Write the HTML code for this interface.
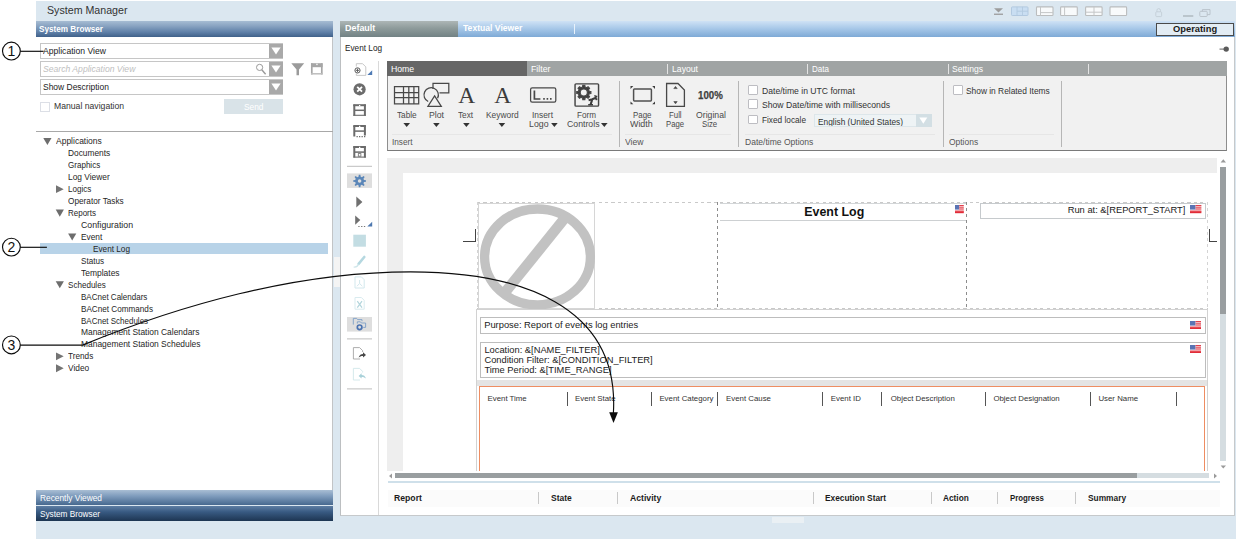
<!DOCTYPE html>
<html>
<head>
<meta charset="utf-8">
<title>System Manager</title>
<style>
*{box-sizing:border-box;margin:0;padding:0}
html,body{width:1238px;height:540px;overflow:hidden;background:#fff}
body{font-family:"Liberation Sans",sans-serif;position:relative;color:#333}
.a{position:absolute}
.t{position:absolute;white-space:nowrap;line-height:1}
.tri{width:0;height:0;border-left:4.5px solid transparent;border-right:4.5px solid transparent;border-top:7px solid #fff}
.dash-h{height:1px;background:repeating-linear-gradient(90deg,#c9c9c9 0 3.2px,transparent 3.2px 6.4px)}
.dash-v{width:1px;background:repeating-linear-gradient(180deg,#8c8c8c 0 3.3px,transparent 3.3px 6px)}
.dash-vl{width:1px;background:repeating-linear-gradient(180deg,#d4d4d4 0 3.3px,transparent 3.3px 6px)}
</style>
</head>
<body>
<div class="a" style="left:36px;top:1px;width:1200.2px;height:537.5px;background:#dbe7f0;"></div>
<div class="t" style="left:46.80px;top:4.90px;font-size:10.8px;color:#333;transform:scaleX(0.9862);transform-origin:0 0;">System Manager</div>
<div class="a" style="left:36px;top:21px;width:297px;height:16px;background:linear-gradient(#a6bcd3,#8aa4c2 30%,#5f80a8 70%,#40618a);"></div>
<div class="t" style="left:39.30px;top:24.80px;font-size:9px;color:#fff;font-weight:bold;transform:scaleX(0.9074);transform-origin:0 0;">System Browser</div>
<div class="a" style="left:36px;top:37px;width:297px;height:453px;background:#fff;"></div>
<div class="a" style="left:332.3px;top:37px;width:1.2px;height:453px;background:#c2c4c6;"></div>
<div class="a" style="left:333.6px;top:256.7px;width:6.2px;height:30px;background:#f4f4f4;"></div>
<div class="a" style="left:40px;top:43.4px;width:243px;height:15.2px;background:#fff;border:1.2px solid #c6c6c6;"></div>
<div class="a" style="left:269px;top:44px;width:13.8px;height:14px;background:#a9a9a9;"></div>
<div class="a" style="left:40px;top:61.4px;width:243px;height:15.2px;background:#fff;border:1.2px solid #c6c6c6;"></div>
<div class="a" style="left:269px;top:62px;width:13.8px;height:14px;background:#a9a9a9;"></div>
<div class="a" style="left:40px;top:79.4px;width:243px;height:15.2px;background:#fff;border:1.2px solid #c6c6c6;"></div>
<div class="a" style="left:269px;top:80px;width:13.8px;height:14px;background:#a9a9a9;"></div>
<div class="t" style="left:43.00px;top:46.70px;font-size:9.2px;color:#222;transform:scaleX(0.9356);transform-origin:0 0;">Application View</div>
<div class="t" style="left:43.40px;top:64.90px;font-size:8.8px;color:#c0c0c0;font-style:italic;transform:scaleX(0.9787);transform-origin:0 0;">Search Application View</div>
<div class="t" style="left:43.00px;top:82.70px;font-size:9.2px;color:#222;transform:scaleX(0.9220);transform-origin:0 0;">Show Description</div>
<svg class="a" style="left:255px;top:63px" width="12" height="12" viewBox="0 0 12 12"><circle cx="4.6" cy="4.4" r="3.1" fill="none" stroke="#9a9a9a" stroke-width="1"/><path d="M6.8 6.8L10.6 11.2" stroke="#9a9a9a" stroke-width="1.4"/></svg>
<svg class="a" style="left:291px;top:63px" width="14" height="13" viewBox="0 0 14 13"><path d="M0.3 0.3H13.2L8 6.6V12.2H5.5V6.6Z" fill="#9b9b9b"/></svg>
<svg class="a" style="left:310px;top:62px" width="15" height="15" viewBox="310 62 15 15" fill="none" stroke="#a6a6a6"><path d="M311.8 63.3V74.6M321.8 63.3V74.6" stroke-width="1.7"/><path d="M311 65.2H322.6" stroke-width="4"/><path d="M311 73.8H322.6" stroke-width="1.5" stroke="#bdbdbd"/><rect x="316.3" y="63.7" width="1.3" height="1.4" fill="#fff" stroke="none"/></svg>
<div class="a" style="left:40px;top:101.6px;width:10px;height:10px;background:#fff;border:1px solid #dcdfe6;"></div>
<div class="t" style="left:53.50px;top:101.80px;font-size:9px;color:#333;transform:scaleX(0.9597);transform-origin:0 0;">Manual navigation</div>
<div class="a" style="left:224px;top:99px;width:59px;height:15px;background:#d9e3e8;"></div>
<div class="t" style="left:243.75px;top:102.65px;font-size:9.3px;color:#fff;transform:scaleX(0.8979);transform-origin:0 0;">Send</div>
<div class="a" style="left:36px;top:131px;width:297px;height:1px;background:#a8a8a8;"></div>
<div class="a" style="left:40px;top:243px;width:288px;height:11px;background:#b8d3e8;"></div>
<div class="t" style="left:55.80px;top:136.90px;font-size:8.8px;color:#262626;transform:scaleX(0.9653);transform-origin:0 0;">Applications</div>
<div class="t" style="left:68.20px;top:148.90px;font-size:8.8px;color:#262626;transform:scaleX(0.9482);transform-origin:0 0;">Documents</div>
<div class="t" style="left:68.20px;top:160.90px;font-size:8.8px;color:#262626;transform:scaleX(0.9145);transform-origin:0 0;">Graphics</div>
<div class="t" style="left:68.20px;top:172.90px;font-size:8.8px;color:#262626;transform:scaleX(0.9507);transform-origin:0 0;">Log Viewer</div>
<div class="t" style="left:68.20px;top:184.90px;font-size:8.8px;color:#262626;transform:scaleX(0.9200);transform-origin:0 0;">Logics</div>
<div class="t" style="left:68.20px;top:196.90px;font-size:8.8px;color:#262626;transform:scaleX(0.9361);transform-origin:0 0;">Operator Tasks</div>
<div class="t" style="left:68.20px;top:208.90px;font-size:8.8px;color:#262626;transform:scaleX(0.9088);transform-origin:0 0;">Reports</div>
<div class="t" style="left:80.60px;top:220.90px;font-size:8.8px;color:#262626;transform:scaleX(0.9935);transform-origin:0 0;">Configuration</div>
<div class="t" style="left:80.60px;top:232.90px;font-size:8.8px;color:#262626;transform:scaleX(0.9466);transform-origin:0 0;">Event</div>
<div class="t" style="left:93.00px;top:244.90px;font-size:8.8px;color:#262626;transform:scaleX(0.9337);transform-origin:0 0;">Event Log</div>
<div class="t" style="left:80.60px;top:256.90px;font-size:8.8px;color:#262626;transform:scaleX(0.9220);transform-origin:0 0;">Status</div>
<div class="t" style="left:80.60px;top:268.90px;font-size:8.8px;color:#262626;transform:scaleX(0.9625);transform-origin:0 0;">Templates</div>
<div class="t" style="left:68.20px;top:280.90px;font-size:8.8px;color:#262626;transform:scaleX(0.9174);transform-origin:0 0;">Schedules</div>
<div class="t" style="left:80.60px;top:292.90px;font-size:8.8px;color:#262626;transform:scaleX(0.9111);transform-origin:0 0;">BACnet Calendars</div>
<div class="t" style="left:80.60px;top:304.90px;font-size:8.8px;color:#262626;transform:scaleX(0.9259);transform-origin:0 0;">BACnet Commands</div>
<div class="t" style="left:80.60px;top:316.90px;font-size:8.8px;color:#262626;transform:scaleX(0.9084);transform-origin:0 0;">BACnet Schedules</div>
<div class="t" style="left:80.60px;top:327.90px;font-size:8.8px;color:#262626;transform:scaleX(0.9567);transform-origin:0 0;">Management Station Calendars</div>
<div class="t" style="left:80.60px;top:339.90px;font-size:8.8px;color:#262626;transform:scaleX(0.9580);transform-origin:0 0;">Management Station Schedules</div>
<div class="t" style="left:68.20px;top:351.90px;font-size:8.8px;color:#262626;transform:scaleX(0.9350);transform-origin:0 0;">Trends</div>
<div class="t" style="left:68.20px;top:363.90px;font-size:8.8px;color:#262626;transform:scaleX(0.9487);transform-origin:0 0;">Video</div>
<div class="a" style="left:36px;top:490px;width:297px;height:15px;background:linear-gradient(#a9bed4,#7f9cbd 40%,#47698f);"></div>
<div class="t" style="left:40.00px;top:493.80px;font-size:9px;color:#fff;transform:scaleX(0.9272);transform-origin:0 0;">Recently Viewed</div>
<div class="a" style="left:36px;top:506px;width:297px;height:15px;background:linear-gradient(#5e7ea3,#385a82 40%,#1d3552);"></div>
<div class="t" style="left:40.00px;top:509.80px;font-size:9px;color:#fff;transform:scaleX(0.9159);transform-origin:0 0;">System Browser</div>
<div class="a" style="left:340px;top:21px;width:895px;height:16px;background:linear-gradient(#cfe2f5,#a9c9e9 45%,#7eaad6);"></div>
<div class="a" style="left:340px;top:21px;width:117.5px;height:16px;background:linear-gradient(#adb6b6,#8e9b9b 45%,#728284);"></div>
<div class="t" style="left:345.30px;top:23.65px;font-size:9.3px;color:#fff;font-weight:bold;transform:scaleX(0.9614);transform-origin:0 0;">Default</div>
<div class="t" style="left:463.30px;top:23.65px;font-size:9.3px;color:#fff;font-weight:bold;transform:scaleX(0.9243);transform-origin:0 0;">Textual Viewer</div>
<div class="a" style="left:574px;top:24px;width:1px;height:10px;background:#e8f2fb;"></div>
<div class="a" style="left:1156px;top:23px;width:78.4px;height:13px;background:#e2ecf4;border:1px solid #4a4a4a;"></div>
<div class="t" style="left:1173.30px;top:23.90px;font-size:9.8px;color:#1a1a1a;font-weight:bold;transform:scaleX(0.9529);transform-origin:0 0;">Operating</div>
<div class="a" style="left:340px;top:37px;width:895px;height:479px;background:#fff;border-left:1px solid #bcbfc1;border-bottom:1px solid #c6c9cb;border-right:1px solid #c6c9cb;"></div>
<div class="t" style="left:345.00px;top:43.70px;font-size:9.2px;color:#222;transform:scaleX(0.8955);transform-origin:0 0;">Event Log</div>
<div class="a" style="left:378px;top:61px;width:1px;height:454px;background:#d9d9d9;"></div>
<div class="a" style="left:387px;top:61px;width:840px;height:90px;background:#f1f1f1;border:1px solid #8e8e8e;border-bottom:1.5px solid #7a7a7a;"></div>
<div class="a" style="left:387px;top:61px;width:840px;height:14.5px;background:#a0a4a4;"></div>
<div class="a" style="left:387px;top:61px;width:140px;height:14.5px;background:#666;"></div>
<div class="t" style="left:391.00px;top:64.65px;font-size:9.3px;color:#fff;transform:scaleX(0.9352);transform-origin:0 0;">Home</div>
<div class="t" style="left:531.00px;top:64.65px;font-size:9.3px;color:#fff;transform:scaleX(0.9436);transform-origin:0 0;">Filter</div>
<div class="a" style="left:667px;top:63.5px;width:1px;height:10px;background:#e4e4e4;"></div>
<div class="t" style="left:671.70px;top:64.65px;font-size:9.3px;color:#fff;transform:scaleX(0.9312);transform-origin:0 0;">Layout</div>
<div class="a" style="left:807.3px;top:63.5px;width:1px;height:10px;background:#e4e4e4;"></div>
<div class="t" style="left:812.00px;top:64.65px;font-size:9.3px;color:#fff;transform:scaleX(0.8654);transform-origin:0 0;">Data</div>
<div class="a" style="left:947.7px;top:63.5px;width:1px;height:10px;background:#e4e4e4;"></div>
<div class="t" style="left:952.00px;top:64.65px;font-size:9.3px;color:#fff;transform:scaleX(0.9226);transform-origin:0 0;">Settings</div>
<div class="a" style="left:1088px;top:63.5px;width:1px;height:10px;background:#e4e4e4;"></div>
<div class="t" style="left:396.85px;top:110.80px;font-size:9px;color:#4a4a4a;transform:scaleX(0.9157);transform-origin:0 0;">Table</div>
<div class="t" style="left:429.20px;top:110.80px;font-size:9px;color:#4a4a4a;transform:scaleX(0.9672);transform-origin:0 0;">Plot</div>
<div class="t" style="left:458.45px;top:110.80px;font-size:9px;color:#4a4a4a;transform:scaleX(0.9149);transform-origin:0 0;">Text</div>
<div class="t" style="left:485.70px;top:110.80px;font-size:9px;color:#4a4a4a;transform:scaleX(0.9311);transform-origin:0 0;">Keyword</div>
<div class="t" style="left:532.30px;top:110.80px;font-size:9px;color:#4a4a4a;transform:scaleX(0.9330);transform-origin:0 0;">Insert</div>
<div class="t" style="left:529.40px;top:119.80px;font-size:9px;color:#4a4a4a;transform:scaleX(0.9741);transform-origin:0 0;">Logo</div>
<div class="t" style="left:577.30px;top:110.80px;font-size:9px;color:#4a4a4a;transform:scaleX(0.9050);transform-origin:0 0;">Form</div>
<div class="t" style="left:566.90px;top:119.80px;font-size:9px;color:#4a4a4a;transform:scaleX(0.9698);transform-origin:0 0;">Controls</div>
<div class="t" style="left:633.40px;top:110.80px;font-size:9px;color:#4a4a4a;transform:scaleX(0.8754);transform-origin:0 0;">Page</div>
<div class="t" style="left:630.15px;top:119.80px;font-size:9px;color:#4a4a4a;transform:scaleX(0.9867);transform-origin:0 0;">Width</div>
<div class="t" style="left:669.30px;top:110.80px;font-size:9px;color:#4a4a4a;transform:scaleX(0.8689);transform-origin:0 0;">Full</div>
<div class="t" style="left:665.80px;top:119.80px;font-size:9px;color:#4a4a4a;transform:scaleX(0.8564);transform-origin:0 0;">Page</div>
<div class="t" style="left:696.05px;top:110.80px;font-size:9px;color:#4a4a4a;transform:scaleX(0.9642);transform-origin:0 0;">Original</div>
<div class="t" style="left:702.20px;top:119.80px;font-size:9px;color:#4a4a4a;transform:scaleX(0.8682);transform-origin:0 0;">Size</div>
<div class="t" style="left:698.40px;top:89.55px;font-size:11.5px;color:#3e3e3e;font-weight:bold;transform:scaleX(0.8432);transform-origin:0 0;-webkit-text-stroke:0.25px #3e3e3e;">100%</div>
<div class="t" style="left:392.40px;top:137.80px;font-size:9px;color:#555;transform:scaleX(0.9108);transform-origin:0 0;">Insert</div>
<div class="t" style="left:625.10px;top:137.80px;font-size:9px;color:#555;transform:scaleX(0.9615);transform-origin:0 0;">View</div>
<div class="t" style="left:744.50px;top:137.80px;font-size:9px;color:#555;transform:scaleX(0.9483);transform-origin:0 0;">Date/time Options</div>
<div class="t" style="left:948.90px;top:137.80px;font-size:9px;color:#555;transform:scaleX(0.9383);transform-origin:0 0;">Options</div>
<div class="a" style="left:392px;top:134px;width:220px;height:1px;background:#e6e6e6;"></div>
<div class="a" style="left:625px;top:134px;width:106px;height:1px;background:#e6e6e6;"></div>
<div class="a" style="left:745px;top:134px;width:190px;height:1px;background:#e6e6e6;"></div>
<div class="a" style="left:949px;top:134px;width:105px;height:1px;background:#e6e6e6;"></div>
<div class="a" style="left:618.8px;top:81px;width:1px;height:66px;background:#b6b6b6;"></div>
<div class="a" style="left:738.1px;top:81px;width:1px;height:66px;background:#b6b6b6;"></div>
<div class="a" style="left:942.6px;top:81px;width:1px;height:66px;background:#b6b6b6;"></div>
<div class="a" style="left:1060.9px;top:81px;width:1px;height:66px;background:#b6b6b6;"></div>
<div class="a" style="left:748.2px;top:85.3px;width:10px;height:9.8px;background:#fff;border:1px solid #bdbdc2;border-radius:1px;"></div>
<div class="a" style="left:748.2px;top:99.4px;width:10px;height:9.8px;background:#fff;border:1px solid #bdbdc2;border-radius:1px;"></div>
<div class="a" style="left:748.2px;top:114.5px;width:10px;height:9.8px;background:#fff;border:1px solid #bdbdc2;border-radius:1px;"></div>
<div class="a" style="left:952.7px;top:85.3px;width:10px;height:9.8px;background:#fff;border:1px solid #bdbdc2;border-radius:1px;"></div>
<div class="t" style="left:762.00px;top:86.80px;font-size:9px;color:#333;transform:scaleX(0.9565);transform-origin:0 0;">Date/time in UTC format</div>
<div class="t" style="left:762.00px;top:100.80px;font-size:9px;color:#333;transform:scaleX(0.9585);transform-origin:0 0;">Show Date/time with milliseconds</div>
<div class="t" style="left:762.00px;top:115.80px;font-size:9px;color:#333;transform:scaleX(0.9163);transform-origin:0 0;">Fixed locale</div>
<div class="t" style="left:966.00px;top:86.80px;font-size:9px;color:#333;transform:scaleX(0.9296);transform-origin:0 0;">Show in Related Items</div>
<div class="a" style="left:814px;top:114px;width:117.5px;height:13px;background:#eef3f5;border:1px solid #dde6ea;"></div>
<div class="a" style="left:915.5px;top:114px;width:16px;height:13px;background:#d3dfe4;"></div>
<div class="a" style="left:815px;top:115px;width:100px;height:11px;overflow:hidden">
<div class="t" style="left:2.60px;top:2.80px;font-size:9px;color:#333;transform:scaleX(0.9235);transform-origin:0 0;">English (United States)</div>
</div>
<svg class="a" style="left:387px;top:76px" width="340" height="40" viewBox="387 76 340 40" fill="none" stroke="#484848" stroke-width="1.25">
<path d="M394.5 86.5H418.7V103.8H394.5Z M394.5 92.5H418.7 M394.5 97.6H418.7 M403.5 86.5V103.8 M408.8 86.5V103.8 M413.9 86.5V103.8"/>
<path d="M433 89V83.4H448.8V92.8H439.5"/><path d="M428.2 101.5A7.2 7.2 0 1 1 437.6 98.2"/><path d="M434.6 95.8L441.3 106.3H427.9Z" stroke-linejoin="miter"/>
<rect x="530.6" y="87.8" width="25.2" height="14.2" rx="1.6"/><path d="M534.4 90.4V99H540.4" stroke-width="1.7"/><path d="M543.2 98.9H544.8 M546.6 98.9H548.2 M550 98.9H551.6" stroke-width="1.7"/>
<rect x="575.05" y="83.85" width="23.5" height="22.3" rx="1" stroke-width="1.45" stroke="#444"/>
<path d="M582.56 87.14 L582.80 85.47 L584.80 85.47 L585.04 87.14 L586.71 87.83 L588.06 86.82 L589.48 88.24 L588.47 89.59 L589.16 91.26 L590.83 91.50 L590.83 93.50 L589.16 93.74 L588.47 95.41 L589.48 96.76 L588.06 98.18 L586.71 97.17 L585.04 97.86 L584.80 99.53 L582.80 99.53 L582.56 97.86 L580.89 97.17 L579.54 98.18 L578.12 96.76 L579.13 95.41 L578.44 93.74 L576.77 93.50 L576.77 91.50 L578.44 91.26 L579.13 89.59 L578.12 88.24 L579.54 86.82 L580.89 87.83Z" fill="#3c3c3c"/><circle cx="583.8" cy="92.5" r="3.6" fill="#f1f1f1"/>
<path d="M588.6 100.2L592.3 99.3L596.6 97.6 M592.3 99.3L590.6 104.6" stroke="#3c3c3c" stroke-width="2.1" stroke-linecap="butt"/><path d="M594.3 95.6L597.2 96.8M595.6 99.8L597.3 98.6M588.2 104.8H593" stroke="#3c3c3c" stroke-width="1.5"/>
<rect x="633.6" y="88.9" width="17.8" height="12" rx="0.8" stroke-width="1.5" stroke="#505050"/>
<path d="M630.5 86.1H633.3L630.5 88.9Z M655 86.1H652.2L655 88.9Z M630.5 104.2H633.3L630.5 101.4Z M655 104.2H652.2L655 101.4Z" fill="#3c3c3c" stroke="none"/>
<path d="M666.6 83.5H678L684.4 90V106.3H666.6Z" stroke-width="1.3"/>
<path d="M673.8 88.6L675.5 86.4L677.2 88.6Z M673.8 101.6L675.5 103.8L677.2 101.6Z" fill="#484848" stroke-width="0.6"/>
</svg>
<div class="t" style="left:458.3px;top:84.1px;font-family:'Liberation Serif',serif;font-size:23.4px;color:#3c3c3c">A</div>
<div class="t" style="left:494.3px;top:84.1px;font-family:'Liberation Serif',serif;font-size:23.4px;color:#3c3c3c">A</div>
<svg class="a" style="left:990px;top:0" width="246" height="22" viewBox="990 0 246 22" fill="none">
<path d="M994 8.2H1003L998.5 12.6Z" fill="#9c9c9c"/><rect x="994" y="13.6" width="9" height="1.3" fill="#9c9c9c"/>
<rect x="1011.5" y="6.9" width="16.5" height="8.6" rx="0.8" fill="#c9def2" stroke="#b2c9e0" stroke-width="1"/><path d="M1017 6.9V15.5M1022.5 6.9V15.5M1017 11.2H1028" stroke="#b2c9e0" stroke-width="0.9"/>
<rect x="1036.5" y="6.9" width="16.5" height="8.6" rx="0.8" fill="#f8fafb" stroke="#bbbdbe" stroke-width="1.1"/><path d="M1040.5 6.9V15.5M1040.5 12.6H1053" stroke="#c4c6c7" stroke-width="1"/>
<rect x="1060.6" y="6.9" width="16.7" height="8.6" rx="0.8" fill="#f8fafb" stroke="#bbbdbe" stroke-width="1.1"/><path d="M1064.6 6.9V15.5" stroke="#c4c6c7" stroke-width="1"/>
<rect x="1085.6" y="6.9" width="16.5" height="8.6" rx="0.8" fill="#f8fafb" stroke="#bbbdbe" stroke-width="1.1"/><path d="M1094 6.9V15.5M1085.6 12.2H1102" stroke="#c4c6c7" stroke-width="1"/>
<rect x="1110" y="6.9" width="16.6" height="8.6" rx="0.8" fill="#f8fafb" stroke="#bbbdbe" stroke-width="1.1"/>
<rect x="1155.8" y="11.8" width="5.8" height="4.8" rx="0.8" stroke="#c3ced7" stroke-width="0.9"/><path d="M1156.9 11.8V10.4A1.8 1.8 0 0 1 1160.5 10.4V11.8" stroke="#c3ced7" stroke-width="0.9"/>
<path d="M1183 16H1193.3" stroke="#a9b2b9" stroke-width="1.3"/>
<rect x="1199.8" y="11.3" width="7.4" height="5.2" rx="0.8" stroke="#b7c0c7" stroke-width="0.9"/><path d="M1202.4 11.3V9.6H1210V14.6H1207.2" stroke="#b7c0c7" stroke-width="0.9"/>
</svg>
<svg class="a" style="left:1216px;top:44px" width="16" height="10" viewBox="1216 44 16 10"><path d="M1219.5 49.1H1224" stroke="#666" stroke-width="1"/><circle cx="1226.2" cy="49.1" r="2.7" fill="#5a5a5a"/></svg>
<svg class="a" style="left:344px;top:58px" width="34" height="336" viewBox="344 58 34 336" fill="none">
<path d="M356.3 66.5V63.7H362.6L365.8 66.9V75.4H356.3V73.5" stroke="#c2c2c2" stroke-width="0.9"/>
<circle cx="357.5" cy="70.4" r="2.6" stroke="#5a5a5a" stroke-width="1"/><path d="M357.5 68.6V72.2M355.7 70.4H359.3" stroke="#5a5a5a" stroke-width="0.9"/>
<path d="M372.2 70.3V74.9H367.3Z" fill="#4f7bb5"/>
<circle cx="359.6" cy="89.3" r="6.1" fill="#6c6c6c"/><path d="M357.2 86.9L362 91.7M362 86.9L357.2 91.7" stroke="#fff" stroke-width="1.8"/>
<path d="M354.3 104.4V115.8M364.9 104.4V115.8" stroke="#6b6b6b" stroke-width="2"/><path d="M353.3 115.3H365.9" stroke="#6b6b6b" stroke-width="1.1"/>
<path d="M353.3 105.2H365.9" stroke="#6b6b6b" stroke-width="2"/><rect x="359" y="105.0" width="1.3" height="1.3" fill="#fff"/>
<path d="M354.1 110.3H365.1" stroke="#6b6b6b" stroke-width="1.5"/>
<path d="M354.3 136.6V125.8M364.9 125.8V135.4" stroke="#6b6b6b" stroke-width="2"/>
<path d="M356.5 136.6H357.8M359 136.6H360.3M361.5 136.6H362.8M364 136.6H365.3" stroke="#6b6b6b" stroke-width="1.2"/>
<path d="M353.3 126H365.9" stroke="#6b6b6b" stroke-width="2"/><rect x="359" y="125.8" width="1.3" height="1.3" fill="#fff"/>
<path d="M354.1 131.1H365.1" stroke="#6b6b6b" stroke-width="1.5"/>
<path d="M354.3 146.2V157.6M364.9 146.2V157.6" stroke="#6b6b6b" stroke-width="2"/><path d="M353.3 157.1H365.9" stroke="#6b6b6b" stroke-width="1.1"/>
<path d="M353.3 147H365.9" stroke="#6b6b6b" stroke-width="2"/><rect x="359" y="146.8" width="1.3" height="1.3" fill="#fff"/>
<path d="M354.1 152.1H365.1" stroke="#6b6b6b" stroke-width="1.5"/>
<rect x="358.3" y="153.6" width="2.6" height="2.6" stroke="#6b6b6b" stroke-width="0.8"/>
<path d="M347 166.3H372" stroke="#bdbdbd" stroke-width="1"/>
<rect x="347" y="173.4" width="25" height="14.5" fill="#dedede"/>
<path d="M358.52 176.63 L358.80 174.65 L360.40 174.65 L360.68 176.63 L361.92 177.14 L363.52 175.94 L364.66 177.08 L363.46 178.68 L363.97 179.92 L365.95 180.20 L365.95 181.80 L363.97 182.08 L363.46 183.32 L364.66 184.92 L363.52 186.06 L361.92 184.86 L360.68 185.37 L360.40 187.35 L358.80 187.35 L358.52 185.37 L357.28 184.86 L355.68 186.06 L354.54 184.92 L355.74 183.32 L355.23 182.08 L353.25 181.80 L353.25 180.20 L355.23 179.92 L355.74 178.68 L354.54 177.08 L355.68 175.94 L357.28 177.14Z" fill="#5a86b8"/><circle cx="359.6" cy="181" r="1.8" fill="#dedede"/>
<path d="M356.3 196.6L362.4 202L356.3 207.4Z" fill="#707070"/>
<path d="M355.2 215.5L360.3 220.1L355.2 224.8Z" fill="#707070"/>
<path d="M358.3 226.5H359.6M361.1 226.5H362.4M363.9 226.5H365.2" stroke="#777" stroke-width="1.2"/>
<path d="M372.2 221.8V226.5H367.3Z" fill="#4f79b0"/>
<rect x="353.3" y="234.7" width="12.6" height="12" fill="#c3dde3"/>
<path d="M358.6 263.8L364.3 257" stroke="#b5d8e0" stroke-width="2.6" stroke-linecap="round"/><path d="M353.6 267C356.5 267.4 357.8 266 358.4 264.2" stroke="#cfe6ea" stroke-width="1.2"/>
<path d="M355 276.9H361.4L364.2 279.7V288H355Z" stroke="#d3e8ed" stroke-width="1"/><path d="M359.6 280V283.5L357 286.2M359.6 283.5L362.3 286.2" stroke="#d3e8ed" stroke-width="1"/>
<path d="M355 297.5H361.4L364.2 300.3V309.2H355Z" stroke="#d9ebef" stroke-width="1"/><path d="M357.3 301.2L362 307.6M362 301.2L357.3 307.6" stroke="#b3d5dc" stroke-width="1.2"/>
<rect x="347" y="317" width="25" height="14.6" fill="#dedede"/>
<path d="M353.3 324.6V318.4H356.6L357.6 319.6H362V321.2" stroke="#7d9fc7" stroke-width="0.9"/>
<path d="M357.3 323.6V321.8H360.4L361.4 323H365.6V327.4H363.2" stroke="#7d9fc7" stroke-width="0.9"/>
<circle cx="359.6" cy="327.3" r="2.3" stroke="#4a72b0" stroke-width="1.7"/>
<path d="M347 338.9H372" stroke="#bdbdbd" stroke-width="1"/>
<path d="M362.6 352V350.6L359.6 347.6H353.4V359H360" stroke="#a4a4a4" stroke-width="0.9"/>
<path d="M358.6 357.6C359.4 355 361 354 363 354V352.3L366 355L363 357.5V355.9C361.4 355.8 359.9 356.2 358.6 357.6Z" fill="#484848"/>
<path d="M362.6 372.5V371.4L359.6 368.4H353.4V380H360" stroke="#d0e6ea" stroke-width="0.9"/>
<path d="M366 378.6C365.2 376 363.6 375 361.6 375V373.3L358.6 376L361.6 378.5V376.9C363.2 376.8 364.7 377.2 366 378.6Z" fill="#a9d1d9"/>
<path d="M347 388.9H372" stroke="#bdbdbd" stroke-width="1"/>
</svg>
<div class="a" style="left:387px;top:158px;width:830px;height:313px;background:#eeeeee;"></div>
<div class="a" style="left:403px;top:173px;width:814px;height:298px;background:#fff;"></div>
<div class="a" style="left:1220.2px;top:167px;width:5.8px;height:294px;background:#d5dde1;"></div>
<div class="a" style="left:1220.2px;top:167px;width:5.8px;height:147px;background:#999ea0;"></div>
<div class="a" style="left:395px;top:473.4px;width:814px;height:5px;background:#d5dde1;"></div>
<div class="a" style="left:395px;top:473.4px;width:742.3px;height:5px;background:#999ea0;"></div>
<div class="a" style="left:388px;top:481px;width:832px;height:1.5px;background:#cfe0ea;"></div>
<div class="a dash-h" style="left:477px;top:201.5px;width:731px"></div>
<div class="a dash-h" style="left:477px;top:308.2px;width:731px"></div>
<div class="a dash-vl" style="left:477px;top:202px;height:106.5px"></div>
<div class="a dash-v" style="left:717.4px;top:202px;height:106.5px"></div>
<div class="a dash-v" style="left:966.4px;top:202px;height:106.5px"></div>
<div class="a dash-vl" style="left:1207.4px;top:202px;height:106.5px"></div>
<div class="a" style="left:478px;top:202.5px;width:117px;height:106px;background:#fff;border:1px solid #d6d6d6;"></div>
<svg class="a" style="left:478px;top:202px" width="118" height="107" viewBox="0 0 118 107"><ellipse cx="59.5" cy="54.9" rx="52.9" ry="47.9" fill="none" stroke="#c2c2c2" stroke-width="9.3"/><path d="M23.5 94.8L89.5 12.8" stroke="#c2c2c2" stroke-width="10.5"/></svg>
<div class="a" style="left:463px;top:229px;width:13px;height:13px;background:transparent;border-right:1px solid #444;border-bottom:1px solid #444;"></div>
<div class="a" style="left:1209px;top:229px;width:8px;height:13px;background:transparent;border-left:1px solid #444;border-bottom:1px solid #444;"></div>
<div class="a" style="left:719.5px;top:202.5px;width:246px;height:18.2px;background:#fff;border-top:1px solid #d3d6d8;border-bottom:1.4px solid #cdd0d2;"></div>
<div class="t" style="left:804.33px;top:206.10px;font-size:12.4px;color:#111;font-weight:bold;">Event Log</div>
<div class="a" style="left:980px;top:202.6px;width:226.4px;height:16.2px;background:#fff;border:1.2px solid #c6cacd;"></div>
<div class="t" style="left:1067.70px;top:205.64px;font-size:9.33px;color:#222;">Run at: &amp;[REPORT_START]</div>
<div class="a" style="left:476px;top:309.2px;width:732.4px;height:161.8px;background:#fff;border:1px solid #d2d2d2;border-bottom:none;"></div>
<div class="a" style="left:480px;top:317px;width:726px;height:17px;background:#fff;border:1px solid #bdbdbd;"></div>
<div class="t" style="left:484.20px;top:320.63px;font-size:9.33px;color:#222;">Purpose: Report of events log entries</div>
<div class="a" style="left:480px;top:341.5px;width:726px;height:36px;background:#fff;border:1px solid #bdbdbd;"></div>
<div class="t" style="left:484.40px;top:345.63px;font-size:9.33px;color:#222;">Location: &amp;[NAME_FILTER]</div>
<div class="t" style="left:484.40px;top:355.63px;font-size:9.33px;color:#222;">Condition Filter: &amp;[CONDITION_FILTER]</div>
<div class="t" style="left:484.40px;top:365.63px;font-size:9.33px;color:#222;">Time Period: &amp;[TIME_RANGE]</div>
<div class="a" style="left:477px;top:380px;width:730px;height:6px;background:#e4e4e4;"></div>
<div class="a" style="left:479px;top:385.8px;width:726px;height:85.2px;background:#fff;border:1.4px solid #ee8d62;border-bottom:none;"></div>
<div class="t" style="left:487.50px;top:394.88px;font-size:7.85px;color:#333;">Event Time</div>
<div class="t" style="left:575.00px;top:394.88px;font-size:7.85px;color:#333;">Event State</div>
<div class="t" style="left:659.40px;top:394.88px;font-size:7.85px;color:#333;">Event Category</div>
<div class="t" style="left:726.00px;top:394.88px;font-size:7.85px;color:#333;">Event Cause</div>
<div class="t" style="left:830.80px;top:394.88px;font-size:7.85px;color:#333;">Event ID</div>
<div class="t" style="left:890.70px;top:394.88px;font-size:7.85px;color:#333;">Object Description</div>
<div class="t" style="left:993.40px;top:394.88px;font-size:7.85px;color:#333;">Object Designation</div>
<div class="t" style="left:1098.40px;top:394.88px;font-size:7.85px;color:#333;">User Name</div>
<div class="a" style="left:566.8px;top:391.5px;width:1px;height:14.5px;background:#555;"></div>
<div class="a" style="left:650.5px;top:391.5px;width:1px;height:14.5px;background:#555;"></div>
<div class="a" style="left:717.3px;top:391.5px;width:1px;height:14.5px;background:#555;"></div>
<div class="a" style="left:821.5px;top:391.5px;width:1px;height:14.5px;background:#555;"></div>
<div class="a" style="left:881.2px;top:391.5px;width:1px;height:14.5px;background:#555;"></div>
<div class="a" style="left:985.1px;top:391.5px;width:1px;height:14.5px;background:#555;"></div>
<div class="a" style="left:1090.1px;top:391.5px;width:1px;height:14.5px;background:#555;"></div>
<div class="a" style="left:1175.5px;top:391.5px;width:1px;height:14.5px;background:#555;"></div>
<svg class="a" style="left:955.1px;top:205.4px" width="8.8" height="8.2" viewBox="0 0 8.8 8.2"><rect width="8.8" height="8.2" fill="#fff"/><rect x="4.136" y="0" width="4.664000000000001" height="1.2" fill="#e2404c"/><rect x="4.136" y="1.7" width="4.664000000000001" height="1.2" fill="#e6606a"/><rect x="4.136" y="3.4" width="4.664000000000001" height="1.2" fill="#e2404c"/><rect y="5.6" width="8.8" height="2.6" fill="#e0202e"/><rect y="6.7" width="8.8" height="0.4" fill="#f3a0a6"/><rect width="4.136" height="4.6" fill="#5a74b4"/></svg>
<svg class="a" style="left:1190.2px;top:205.4px" width="11.4" height="8.2" viewBox="0 0 11.4 8.2"><rect width="11.4" height="8.2" fill="#fff"/><rect x="5.358" y="0" width="6.042000000000001" height="1.2" fill="#e2404c"/><rect x="5.358" y="1.7" width="6.042000000000001" height="1.2" fill="#e6606a"/><rect x="5.358" y="3.4" width="6.042000000000001" height="1.2" fill="#e2404c"/><rect y="5.6" width="11.4" height="2.6" fill="#e0202e"/><rect y="6.7" width="11.4" height="0.4" fill="#f3a0a6"/><rect width="5.358" height="4.6" fill="#5a74b4"/></svg>
<svg class="a" style="left:1189.6px;top:320.6px" width="11.4" height="8.2" viewBox="0 0 11.4 8.2"><rect width="11.4" height="8.2" fill="#fff"/><rect x="5.358" y="0" width="6.042000000000001" height="1.2" fill="#e2404c"/><rect x="5.358" y="1.7" width="6.042000000000001" height="1.2" fill="#e6606a"/><rect x="5.358" y="3.4" width="6.042000000000001" height="1.2" fill="#e2404c"/><rect y="5.6" width="11.4" height="2.6" fill="#e0202e"/><rect y="6.7" width="11.4" height="0.4" fill="#f3a0a6"/><rect width="5.358" height="4.6" fill="#5a74b4"/></svg>
<svg class="a" style="left:1189.6px;top:344.6px" width="11.4" height="8.2" viewBox="0 0 11.4 8.2"><rect width="11.4" height="8.2" fill="#fff"/><rect x="5.358" y="0" width="6.042000000000001" height="1.2" fill="#e2404c"/><rect x="5.358" y="1.7" width="6.042000000000001" height="1.2" fill="#e6606a"/><rect x="5.358" y="3.4" width="6.042000000000001" height="1.2" fill="#e2404c"/><rect y="5.6" width="11.4" height="2.6" fill="#e0202e"/><rect y="6.7" width="11.4" height="0.4" fill="#f3a0a6"/><rect width="5.358" height="4.6" fill="#5a74b4"/></svg>
<div class="a" style="left:387.5px;top:490px;width:832.5px;height:17px;background:#fbfbfb;"></div>
<div class="t" style="left:394.00px;top:493.75px;font-size:9.1px;color:#1c1c1c;font-weight:bold;transform:scaleX(0.9516);transform-origin:0 0;">Report</div>
<div class="t" style="left:550.50px;top:493.75px;font-size:9.1px;color:#1c1c1c;font-weight:bold;transform:scaleX(0.9348);transform-origin:0 0;">State</div>
<div class="t" style="left:629.50px;top:493.75px;font-size:9.1px;color:#1c1c1c;font-weight:bold;transform:scaleX(0.9523);transform-origin:0 0;">Activity</div>
<div class="t" style="left:825.30px;top:493.75px;font-size:9.1px;color:#1c1c1c;font-weight:bold;transform:scaleX(0.9154);transform-origin:0 0;">Execution Start</div>
<div class="t" style="left:942.80px;top:493.75px;font-size:9.1px;color:#1c1c1c;font-weight:bold;transform:scaleX(0.9114);transform-origin:0 0;">Action</div>
<div class="t" style="left:1009.70px;top:493.75px;font-size:9.1px;color:#1c1c1c;font-weight:bold;transform:scaleX(0.8593);transform-origin:0 0;">Progress</div>
<div class="t" style="left:1087.50px;top:493.75px;font-size:9.1px;color:#1c1c1c;font-weight:bold;transform:scaleX(0.9186);transform-origin:0 0;">Summary</div>
<div class="a" style="left:538.4px;top:492px;width:1px;height:12px;background:#c8c8c8;"></div>
<div class="a" style="left:616.5px;top:492px;width:1px;height:12px;background:#c8c8c8;"></div>
<div class="a" style="left:812.8px;top:492px;width:1px;height:12px;background:#c8c8c8;"></div>
<div class="a" style="left:930.5px;top:492px;width:1px;height:12px;background:#c8c8c8;"></div>
<div class="a" style="left:996.5px;top:492px;width:1px;height:12px;background:#c8c8c8;"></div>
<div class="a" style="left:1075.3px;top:492px;width:1px;height:12px;background:#c8c8c8;"></div>
<div class="a" style="left:772px;top:517px;width:32px;height:5.5px;background:#eaf0f4;"></div>
<svg class="a" style="left:0;top:0" width="1238" height="540" viewBox="0 0 1238 540"><path d="M271.40 47.60 L280.60 47.60 L276.00 54.60Z" fill="#fff"/><path d="M271.40 65.60 L280.60 65.60 L276.00 72.60Z" fill="#fff"/><path d="M271.40 83.60 L280.60 83.60 L276.00 90.60Z" fill="#fff"/><path d="M43.30 137.95 L51.50 137.95 L47.40 145.05Z" fill="#6d6d6d"/><path d="M56.00 185.26 L63.70 189.16 L56.00 193.06Z" fill="#747474"/><path d="M55.70 209.59 L63.90 209.59 L59.80 216.69Z" fill="#6d6d6d"/><path d="M68.10 233.47 L76.30 233.47 L72.20 240.57Z" fill="#6d6d6d"/><path d="M55.70 281.23 L63.90 281.23 L59.80 288.33Z" fill="#6d6d6d"/><path d="M56.00 352.42 L63.70 356.32 L56.00 360.22Z" fill="#747474"/><path d="M56.00 364.36 L63.70 368.26 L56.00 372.16Z" fill="#747474"/><path d="M403.40 122.90 L410.00 122.90 L406.70 127.00Z" fill="#333"/><path d="M433.10 122.90 L439.70 122.90 L436.40 127.00Z" fill="#333"/><path d="M463.10 122.90 L469.70 122.90 L466.40 127.00Z" fill="#333"/><path d="M498.60 122.90 L505.20 122.90 L501.90 127.00Z" fill="#333"/><path d="M551.10 122.90 L557.70 122.90 L554.40 127.00Z" fill="#333"/><path d="M601.00 122.90 L607.60 122.90 L604.30 127.00Z" fill="#333"/><path d="M919.30 117.40 L927.30 117.40 L923.30 123.80Z" fill="#fff"/><path d="M1220.60 162.40 L1226.00 162.40 L1223.30 159.20Z" fill="#9a9a9a"/><path d="M1220.60 465.40 L1226.00 465.40 L1223.30 468.60Z" fill="#9a9a9a"/><path d="M392.00 473.40 L392.00 478.60 L389.00 476.00Z" fill="#9a9a9a"/><path d="M1214.00 473.40 L1214.00 478.60 L1217.00 476.00Z" fill="#9a9a9a"/></svg>
<svg class="a" style="left:0;top:0" width="1238" height="540" viewBox="0 0 1238 540">
<g fill="none" stroke="#0c0c0c" stroke-width="1.15">
<circle cx="11.4" cy="51.1" r="8.9" fill="#fff"/><path d="M20.3 51.3H43.6"/>
<circle cx="11.4" cy="247.1" r="8.9" fill="#fff"/><path d="M20.3 247.3H46.9"/>
<circle cx="11.4" cy="344.9" r="8.9" fill="#fff"/>
<path d="M20.3 345.1H82.6C177.9 305.9 295.4 271.8 410.7 271.8C519.6 271.8 619.7 305 613.4 413"/>
</g><path d="M609.2 412.2L617.9 412.2L613.5 423Z" fill="#0c0c0c"/>
<g font-family="Liberation Sans, sans-serif" font-size="14" fill="#111" text-anchor="middle"><text x="11.3" y="56">1</text><text x="11.4" y="252">2</text><text x="11.4" y="349.8">3</text></g>
</svg>
</body>
</html>
